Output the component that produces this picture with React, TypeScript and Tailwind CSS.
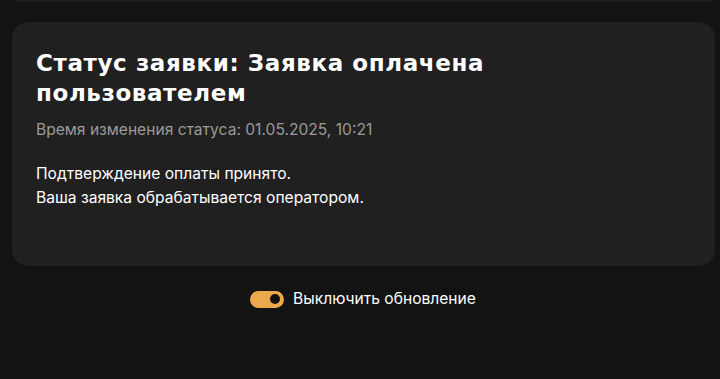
import React from "react";

export default function App() {
  return (
    <div className="w-[720px] h-[379px] bg-[#131313] overflow-hidden" style={{ fontFamily: "Inter, 'Noto Sans', sans-serif" }}>
      <div className="ml-[15px] mr-[8px] h-[2px] bg-[#1c1c1c] rounded-b-[14px]" />
      <div className="ml-[12px] mr-[5px] mt-[20px] h-[244px] rounded-[16px] bg-[#202020] pl-[24px] pr-6 pt-[26px]">
        <h1 className="text-white font-bold text-[23px] leading-[30px] tracking-[0.6px]" style={{ fontFamily: "'DejaVu Sans', sans-serif" }}>
          Статус заявки: Заявка оплачена<br />пользователем
        </h1>
        <div className="mt-[11px] text-[15.6px] leading-[22px] text-[#9a9a9a]">
          Время изменения статуса: 01.05.2025, 10:21
        </div>
        <div className="mt-[21px] text-[15.6px] leading-[24px] text-white">
          <div>Подтверждение оплаты принято.</div>
          <div>Ваша заявка обрабатывается оператором.</div>
        </div>
      </div>
      <div className="mt-[23px] flex items-center justify-center gap-[9px] pl-[6px]">
        <div className="w-[34px] h-[17px] rounded-full bg-[#eba94c] flex items-center justify-end pr-[4px]">
          <div className="w-[10px] h-[10px] rounded-full bg-[#111]" />
        </div>
        <span className="text-white text-[15.6px] leading-[20px]">Выключить обновление</span>
      </div>
    </div>
  );
}
